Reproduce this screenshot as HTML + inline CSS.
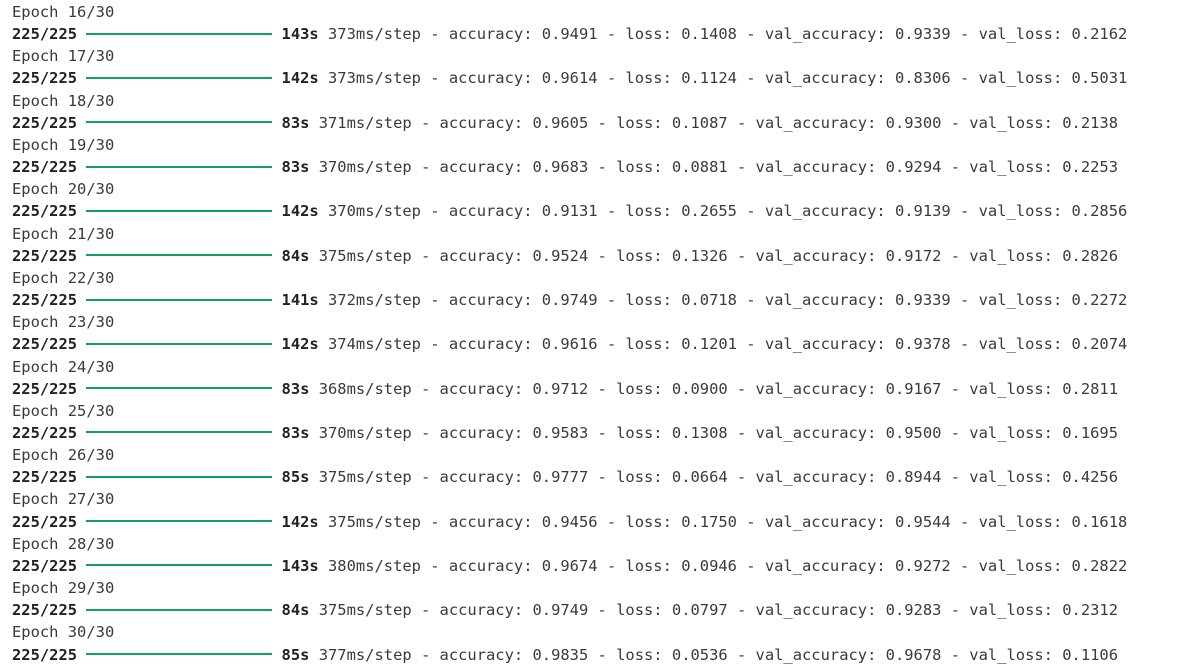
<!DOCTYPE html>
<html><head><meta charset="utf-8"><style>
html,body{margin:0;padding:0;background:#fff;width:1177px;height:669px;overflow:hidden}
pre{margin:0;padding:1px 0 0 12px;font-family:"DejaVu Sans Mono","Liberation Mono",monospace;font-size:15.45px;line-height:22.15px;color:#3a3a3a;white-space:pre}
b{color:#222}
.bar{display:inline-block;width:20ch;height:2px;background:#14a05a;vertical-align:middle;position:relative;top:-1px}
</style></head><body><pre>Epoch 16/30
<b>225/225</b> <span class="bar"></span> <b>143s</b> 373ms/step - accuracy: 0.9491 - loss: 0.1408 - val_accuracy: 0.9339 - val_loss: 0.2162
Epoch 17/30
<b>225/225</b> <span class="bar"></span> <b>142s</b> 373ms/step - accuracy: 0.9614 - loss: 0.1124 - val_accuracy: 0.8306 - val_loss: 0.5031
Epoch 18/30
<b>225/225</b> <span class="bar"></span> <b>83s</b> 371ms/step - accuracy: 0.9605 - loss: 0.1087 - val_accuracy: 0.9300 - val_loss: 0.2138
Epoch 19/30
<b>225/225</b> <span class="bar"></span> <b>83s</b> 370ms/step - accuracy: 0.9683 - loss: 0.0881 - val_accuracy: 0.9294 - val_loss: 0.2253
Epoch 20/30
<b>225/225</b> <span class="bar"></span> <b>142s</b> 370ms/step - accuracy: 0.9131 - loss: 0.2655 - val_accuracy: 0.9139 - val_loss: 0.2856
Epoch 21/30
<b>225/225</b> <span class="bar"></span> <b>84s</b> 375ms/step - accuracy: 0.9524 - loss: 0.1326 - val_accuracy: 0.9172 - val_loss: 0.2826
Epoch 22/30
<b>225/225</b> <span class="bar"></span> <b>141s</b> 372ms/step - accuracy: 0.9749 - loss: 0.0718 - val_accuracy: 0.9339 - val_loss: 0.2272
Epoch 23/30
<b>225/225</b> <span class="bar"></span> <b>142s</b> 374ms/step - accuracy: 0.9616 - loss: 0.1201 - val_accuracy: 0.9378 - val_loss: 0.2074
Epoch 24/30
<b>225/225</b> <span class="bar"></span> <b>83s</b> 368ms/step - accuracy: 0.9712 - loss: 0.0900 - val_accuracy: 0.9167 - val_loss: 0.2811
Epoch 25/30
<b>225/225</b> <span class="bar"></span> <b>83s</b> 370ms/step - accuracy: 0.9583 - loss: 0.1308 - val_accuracy: 0.9500 - val_loss: 0.1695
Epoch 26/30
<b>225/225</b> <span class="bar"></span> <b>85s</b> 375ms/step - accuracy: 0.9777 - loss: 0.0664 - val_accuracy: 0.8944 - val_loss: 0.4256
Epoch 27/30
<b>225/225</b> <span class="bar"></span> <b>142s</b> 375ms/step - accuracy: 0.9456 - loss: 0.1750 - val_accuracy: 0.9544 - val_loss: 0.1618
Epoch 28/30
<b>225/225</b> <span class="bar"></span> <b>143s</b> 380ms/step - accuracy: 0.9674 - loss: 0.0946 - val_accuracy: 0.9272 - val_loss: 0.2822
Epoch 29/30
<b>225/225</b> <span class="bar"></span> <b>84s</b> 375ms/step - accuracy: 0.9749 - loss: 0.0797 - val_accuracy: 0.9283 - val_loss: 0.2312
Epoch 30/30
<b>225/225</b> <span class="bar"></span> <b>85s</b> 377ms/step - accuracy: 0.9835 - loss: 0.0536 - val_accuracy: 0.9678 - val_loss: 0.1106
</pre></body></html>
